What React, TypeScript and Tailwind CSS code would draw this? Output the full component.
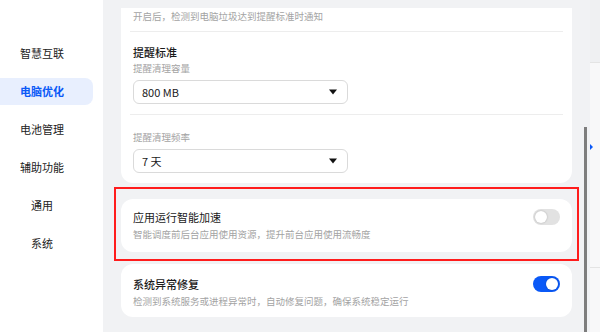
import React from "react";

const navItems = [
  { label: "智慧互联", sub: false },
  { label: "电脑优化", sub: false, active: true },
  { label: "电池管理", sub: false },
  { label: "辅助功能", sub: false },
  { label: "通用", sub: true },
  { label: "系统", sub: true },
];

function Toggle({ on }: { on: boolean }) {
  return (
    <div
      className={
        on
          ? "flex h-[16px] w-[27px] items-center justify-end rounded-full bg-[#0a59f7] px-[2px]"
          : "flex h-[16px] w-[27px] items-center justify-start rounded-full bg-[#e2e2e2] px-[2px]"
      }
    >
      <div className="h-[12px] w-[12px] rounded-full bg-white shadow-[0_0_2px_rgba(0,0,0,0.25)]" />
    </div>
  );
}

function Select({ value }: { value: string }) {
  return (
    <div className="flex h-[24px] w-[215px] items-center justify-between rounded-[6px] border border-[#dadada] bg-white pl-[8px] pr-[10px]">
      <span className="text-[11px] leading-none text-[#1a1a1a]">{value}</span>
      <svg width="8" height="6" viewBox="0 0 8 6">
        <path d="M0 0.5 H8 L4 5.5 Z" fill="#111" />
      </svg>
    </div>
  );
}

export default function App() {
  return (
    <div className="flex h-[332px] w-[600px] overflow-hidden bg-[#f1f2f4] font-['Noto_Sans_CJK_SC','Noto_Sans',sans-serif]">
      {/* sidebar */}
      <aside className="flex w-[103px] shrink-0 flex-col gap-[11px] bg-white pt-[40px] pr-[10px]">
        {navItems.map((item) => (
          <div
            key={item.label}
            className={
              item.active
                ? "flex h-[27px] items-center rounded-r-[8px] bg-[#e8effe] pl-[20px] text-[11px] font-bold text-[#0a59f7]"
                : item.sub
                ? "flex h-[27px] items-center pl-[31px] text-[11px] text-[#222]"
                : "flex h-[27px] items-center pl-[20px] text-[11px] text-[#222]"
            }
          >
            {item.label}
          </div>
        ))}
      </aside>

      {/* content */}
      <main className="flex w-[480px] shrink-0 flex-col pl-[18px] pr-[11px] pt-[8px]">
        <div className="rounded-b-[12px] bg-white pb-[10px] pt-[1px]">
          <p className="px-[12px] text-[9.5px] leading-[14px] text-[#a3a3a3]">
            开启后，检测到电脑垃圾达到提醒标准时通知
          </p>
          <div className="mx-[9px] mt-[8px] h-px bg-[#ededed]" />
          <div className="px-[12px] pt-[12px]">
            <p className="text-[11px] font-medium leading-[16px] text-[#1a1a1a]">提醒标准</p>
            <p className="mt-[1px] text-[9.5px] leading-[14px] text-[#a3a3a3]">提醒清理容量</p>
            <div className="mt-[5px]">
              <Select value="800 MB" />
            </div>
          </div>
          <div className="mx-[9px] mt-[10px] h-px bg-[#ededed]" />
          <div className="px-[12px] pt-[15px]">
            <p className="text-[9.5px] leading-[14px] text-[#a3a3a3]">提醒清理频率</p>
            <div className="mt-[5px]">
              <Select value="7 天" />
            </div>
          </div>
        </div>

        <div className="relative mt-[16px]">
          <div className="rounded-[12px] bg-white px-[12px] pb-[11px] pt-[10px]">
            <div className="flex items-center justify-between">
              <p className="text-[11px] leading-[16px] text-[#1a1a1a]">应用运行智能加速</p>
              <Toggle on={false} />
            </div>
            <p className="mt-[2px] text-[9.5px] leading-[14px] text-[#a3a3a3]">
              智能调度前后台应用使用资源，提升前台应用使用流畅度
            </p>
          </div>
          <div className="pointer-events-none absolute -bottom-[9px] -left-[7px] -right-[7px] -top-[12px] border-[2.5px] border-[#ff1c1c]" />
        </div>

        <div className="mt-[12px] rounded-[12px] bg-white px-[12px] pb-[9px] pt-[12px]">
          <div className="flex items-center justify-between">
            <p className="text-[11px] font-medium leading-[16px] text-[#1a1a1a]">系统异常修复</p>
            <Toggle on />
          </div>
          <p className="mt-[2px] text-[9.5px] leading-[14px] text-[#a3a3a3]">
            检测到系统服务或进程异常时，自动修复问题，确保系统稳定运行
          </p>
        </div>
      </main>

      {/* scrollbar */}
      <div className="w-[4px] shrink-0 pt-[127px]">
        <div className="ml-[1px] h-full w-[2.5px] bg-[#7d7d7d]" />
      </div>

      {/* neighbouring window edge */}
      <div className="flex w-[13px] shrink-0">
        <div className="w-[3px]" />
        <div className="flex flex-1 flex-col">
          <div className="h-[63px] border-b border-[#e4e4e4] bg-[#eff0f2]" />
          <div className="relative flex-1 bg-[#f8f8f9]">
            <div className="absolute left-0 top-[81px] h-0 w-0 border-y-[3px] border-l-[3px] border-y-transparent border-l-[#0a59f7]" />
            <div className="absolute left-0 right-0 top-[204px] h-px bg-[#e4e4e4]" />
          </div>
        </div>
      </div>
    </div>
  );
}
